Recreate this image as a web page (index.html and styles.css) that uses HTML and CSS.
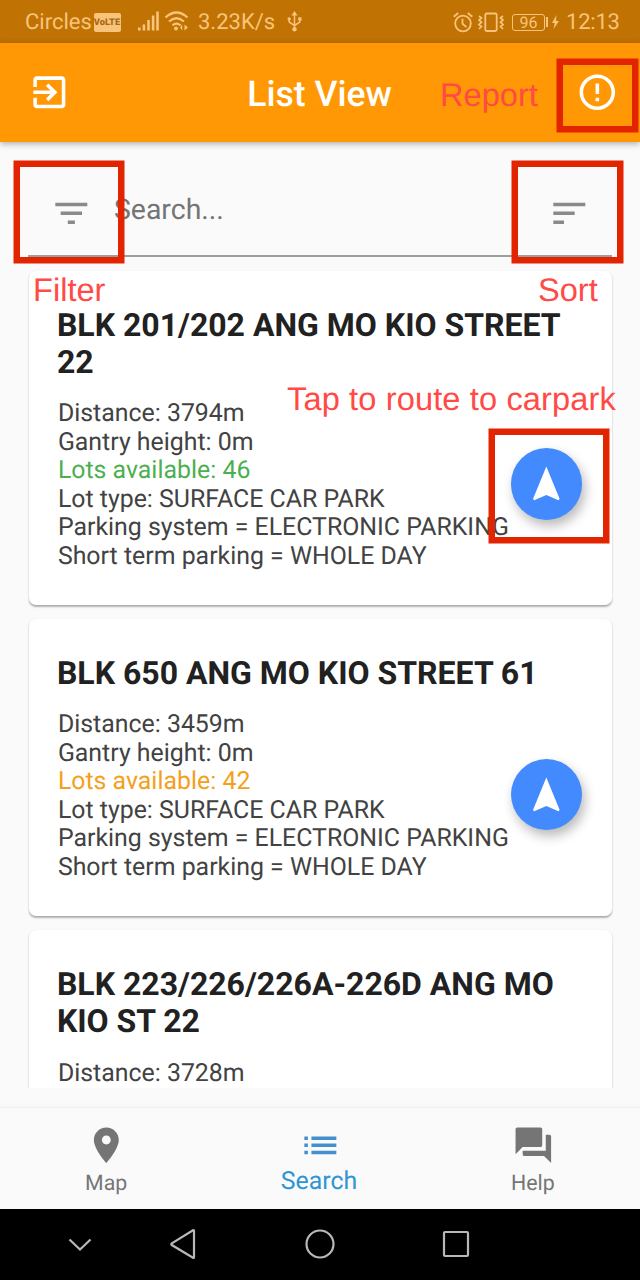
FILE: index.html
```html
<!DOCTYPE html>
<html lang="en">
<head>
<meta charset="utf-8">
<title>List View</title>
<link rel="stylesheet" href="styles.css">
</head>
<body>
<div class="screen">
  <header class="status">
    <span class="carrier">Circles</span>
    <span class="volte">VoLTE</span>
    <svg class="net" width="52" height="24" viewBox="0 0 52 24" fill="currentColor">
      <path d="M0 17.500h2.600v3H0zM4.600 14.500h2.600v6H4.600zM9.200 10h2.600v10.500H9.200zM13.800 5.500h2.600v15h-2.600zM18.200 1.500h2.600v19h-2.600z"/>
      <g fill="none" stroke="currentColor" stroke-width="2.200"><path d="M27.500 7.500q11-10 22 0M31 11.500q7.500-6.500 15 0M34.500 15.300q4-3.500 8 0"/></g>
      <circle cx="38" cy="18.500" r="2"/><path d="M42 17.500l2.200-3v6zM50 17.500l-3.500-3v6z"/>
    </svg>
    <span class="speed">3.23K/s</span>
    <svg class="usb" width="15" height="22" viewBox="0 0 15 22" fill="currentColor">
      <path d="M7.500 0l3 4.500h-6z"/><circle cx="7.500" cy="18.300" r="2.200"/><circle cx="2.200" cy="8" r="1.700"/><path d="M11.200 6.300h3.300v3.300h-3.300z"/>
      <path d="M7.500 3v15M2.200 8v3.200l5.300 3.300 5.300-3.300V8" fill="none" stroke="currentColor" stroke-width="1.500"/>
    </svg>
    <span class="spacer"></span>
    <svg class="alarm" width="20" height="21" viewBox="0 0 20 21" fill="none" stroke="currentColor" stroke-width="1.800">
      <circle cx="10" cy="11.500" r="7.800"/><path d="M9.500 6.800v5l4 3.300M.700 4.800L5.200 1M19.300 4.800L14.800 1"/>
    </svg>
    <svg class="vibrate" width="26" height="21" viewBox="0 0 26 21" fill="none" stroke="currentColor" stroke-width="1.800">
      <rect x="7.300" y="1.500" width="11.400" height="17.500" rx="1.500"/>
      <path d="M1 4l2.500 2L1 8l2.500 2.300L1 12.600l2.500 2L1 17M25 4l-2.500 2L25 8l-2.500 2.300 2.500 2.300-2.500 2L25 17" stroke-width="1.700"/>
    </svg>
    <span class="battery">96</span>
    <svg class="bolt" width="13" height="18" viewBox="0 0 13 18" fill="currentColor"><path d="M0 4h2v10H0zM10.500 2L6 10h2.700l-1.200 6L13 8h-3z"/></svg>
    <span class="clock">12:13</span>
  </header>

  <div class="appbar">
    <svg class="icon" viewBox="0 0 24 24"><path d="M10.090 15.590L11.500 17l5-5-5-5-1.410 1.410L12.670 11H3v2h9.670l-2.580 2.590zM19 3H5c-1.110 0-2 .9-2 2v4h2V5h14v14H5v-4H3v4c0 1.100.89 2 2 2h14c1.100 0 2-.9 2-2V5c0-1.100-.9-2-2-2z"/></svg>
    <h1>List View</h1>
    <svg class="icon" viewBox="0 0 24 24"><path d="M11 15h2v2h-2zm0-8h2v6h-2zm.99-5C6.470 2 2 6.480 2 12s4.470 10 9.990 10C17.520 22 22 17.520 22 12S17.520 2 11.990 2zM12 20c-4.420 0-8-3.580-8-8s3.580-8 8-8 8 3.580 8 8-3.580 8-8 8z"/></svg>
  </div>

  <div class="search">
    <svg class="icon" viewBox="0 0 24 24"><path d="M10 18h4v-2h-4v2zM3 6v2h18V6H3zm3 7h12v-2H6v2z"/></svg>
    <span class="hint">Search...</span>
    <svg class="icon" viewBox="0 0 24 24"><path d="M3 18h6v-2H3v2zM3 6v2h18V6H3zm0 7h12v-2H3v2z"/></svg>
  </div>

  <main class="list">
    <article class="card">
      <h2>BLK 201/202 ANG MO KIO STREET 22</h2>
      <div class="row">
        <div class="info">
          <p>Distance: 3794m</p>
          <p>Gantry height: 0m</p>
          <p class="green">Lots available: 46</p>
          <p>Lot type: SURFACE CAR PARK</p>
          <p>Parking system = ELECTRONIC PARKING</p>
          <p>Short term parking = WHOLE DAY</p>
        </div>
        <div class="fab"><svg class="icon" viewBox="0 0 24 24"><path d="M12 2L4.500 20.290l.71.71L12 18l6.790 3 .71-.71z"/></svg></div>
      </div>
    </article>
    <article class="card">
      <h2>BLK 650 ANG MO KIO STREET 61</h2>
      <div class="row">
        <div class="info">
          <p>Distance: 3459m</p>
          <p>Gantry height: 0m</p>
          <p class="orange">Lots available: 42</p>
          <p>Lot type: SURFACE CAR PARK</p>
          <p>Parking system = ELECTRONIC PARKING</p>
          <p>Short term parking = WHOLE DAY</p>
        </div>
        <div class="fab"><svg class="icon" viewBox="0 0 24 24"><path d="M12 2L4.500 20.290l.71.71L12 18l6.790 3 .71-.71z"/></svg></div>
      </div>
    </article>
    <article class="card">
      <h2>BLK 223/226/226A-226D ANG MO KIO ST 22</h2>
      <div class="row">
        <div class="info"><p>Distance: 3728m</p></div>
      </div>
    </article>
  </main>

  <nav class="tabs">
    <div class="tab">
      <svg class="icon" viewBox="0 0 24 24"><path d="M12 2C8.130 2 5 5.130 5 9c0 5.250 7 13 7 13s7-7.750 7-13c0-3.870-3.130-7-7-7zm0 9.500c-1.380 0-2.500-1.120-2.500-2.500s1.120-2.500 2.500-2.500 2.500 1.120 2.500 2.500-1.120 2.500-2.500 2.500z"/></svg>
      <span>Map</span>
    </div>
    <div class="tab active">
      <svg class="icon" viewBox="0 0 24 24"><path d="M3 13h2v-2H3v2zm0 4h2v-2H3v2zm0-8h2V7H3v2zm4 4h14v-2H7v2zm0 4h14v-2H7v2zM7 7v2h14V7H7z"/></svg>
      <span>Search</span>
    </div>
    <div class="tab">
      <svg class="icon" viewBox="0 0 24 24"><path d="M21 6h-2v9H6v2c0 .55.45 1 1 1h11l4 4V7c0-.55-.45-1-1-1zm-4 6V3c0-.55-.45-1-1-1H3c-.55 0-1 .45-1 1v14l4-4h10c.55 0 1-.45 1-1z"/></svg>
      <span>Help</span>
    </div>
  </nav>

  <footer class="system">
    <svg width="24" height="32" viewBox="0 0 24 32"><path d="M1.500 11.500L12 21.500l10.500-10"/></svg>
    <svg width="26" height="32" viewBox="0 0 26 32"><path d="M24 2.700V29.300q0 1-1 .5L1.800 17q-1-.8 0-1.600L23 2.300q1-.5 1 .4z"/></svg>
    <svg width="30" height="32" viewBox="0 0 30 32"><circle cx="15" cy="16" r="13.500"/></svg>
    <svg width="28" height="32" viewBox="0 0 28 32"><rect x="2" y="4" width="24" height="24" rx="1"/></svg>
  </footer>

  <div class="mark mark-report"></div>
  <div class="mark mark-filter"></div>
  <div class="mark mark-sort"></div>
  <div class="mark mark-route"></div>
  <span class="note note-report">Report</span>
  <span class="note note-filter">Filter</span>
  <span class="note note-sort">Sort</span>
  <span class="note note-route">Tap to route to carpark</span>
</div>
</body>
</html>
```
FILE: styles.css
```css
* { box-sizing: border-box; }
body { margin: 0; font-family: Roboto, "Liberation Sans", sans-serif; text-rendering: geometricPrecision; }
h1, h2, p { margin: 0; }
.screen { position: relative; width: 640px; height: 1280px; overflow: hidden; background: #fafafa; display: flex; flex-direction: column; }
.icon { width: 42.67px; height: 42.67px; fill: currentColor; flex: none; display: block; }

.status { height: 42.67px; flex: none; background: #c07202; color: #f8c47c; display: flex; align-items: center; padding: 2px 22px 0 25px; font-size: 22px; line-height: 26px; white-space: nowrap; }
.status span { padding-top: 2px; }
.status svg { flex: none; }
.carrier { width: 68.500px; }
.status .volte { width: 27px; height: 19px; padding-top: 0; background: #f8c47c; color: #a9690f; border-radius: 2px; font-size: 9.300px; line-height: 19px; font-weight: 900; text-align: center; }
.net { margin-left: 17.500px; }
.speed { margin-left: 8px; width: 75px; }
.usb { margin-left: 14px; }
.spacer { flex: 1; }
.alarm { margin-right: -1px; }
.vibrate { margin-left: 6px; }
.status .battery { width: 33px; height: 17px; padding-top: 0; border: 1px solid currentColor; border-radius: 3px; font-size: 16px; line-height: 16px; text-align: center; margin-left: 8px; }
.bolt { margin: 0 7px 0 1px; }
.clock { width: 52px; letter-spacing: -.2px; }

.appbar { height: 99.500px; flex: none; background: #ff9804; color: #fff; display: flex; align-items: center; justify-content: space-between; padding: 0 21.300px 0 28.400px; box-shadow: 0 2px 6px rgba(0,0,0,.3); z-index: 1; }
.appbar h1 { font-size: 35.560px; line-height: 42px; font-weight: 500; margin-right: 8px; padding-top: 4px; }

.search { height: 114.500px; flex: none; margin: 0 28.400px; border-bottom: 2px solid #9e9e9e; color: #8a8a8a; display: flex; align-items: flex-start; padding: 28px 21.300px 0; }
.search .icon { margin-top: 21.500px; }
.hint { flex: 1; font-size: 28.440px; line-height: 34px; color: #757575; margin: 23px 0 0 21.600px; }

.list { flex: none; height: 831.300px; padding: 14.200px 28.500px 0; display: flex; flex-direction: column; gap: 14.200px; clip-path: inset(0); }
.card { flex: none; background: #fff; border-radius: 7px; padding: 36.100px 28.400px 34.900px; box-shadow: 0 1.500px 2px rgba(0,0,0,.28), 0 1px 1px rgba(0,0,0,.06); }
.card h2 { font-size: 32px; line-height: 37.330px; font-weight: 700; color: #212121; }
.row { margin-top: 17.800px; display: flex; align-items: center; justify-content: space-between; }
.info { padding: 1px 0 0 1px; margin-bottom: -1px; font-size: 24.890px; line-height: 28.440px; color: #424242; white-space: nowrap; }
.green { color: #4caf50; }
.orange { color: #f5a01c; }
.fab { width: 71.100px; height: 71.100px; margin: -1.500px 1px 0 0; border-radius: 50%; background: #448aff; color: #fff; display: flex; align-items: center; justify-content: center; box-shadow: 3px 6px 12px rgba(0,0,0,.28); }

.tabs { height: 101px; margin-top: 20px; flex: none; display: flex; color: #757575; box-shadow: 0 -1px 2px rgba(0,0,0,.06); }
.tab { flex: 1; display: flex; flex-direction: column; align-items: center; padding-top: 16px; font-size: 21.330px; line-height: 25px; }
.tab span { margin-top: 4.500px; margin-right: 1px; }
.active { color: #2f95d3; font-size: 24.890px; line-height: 28px; }
.active span { margin-top: 1px; margin-right: 2px; }
.active .icon { color: #438fd0; }

.system { flex: 1; background: #000; display: flex; align-items: center; padding-left: 68px; }
.system svg { fill: none; stroke: #b8b8b8; stroke-width: 2.200; flex: none; }
.system svg:nth-child(2) { margin-left: 77.500px; }
.system svg:nth-child(3) { margin-left: 109px; }
.system svg:nth-child(4) { margin-left: 107px; }

.mark { position: absolute; border: 6px solid #e22400; box-shadow: 0 0 0 .5px #e22400; z-index: 2; }
.mark-report { left: 557px; top: 59px; width: 81px; height: 73px; }
.mark-filter { left: 14px; top: 161px; width: 110px; height: 102px; }
.mark-sort { left: 512px; top: 161px; width: 111px; height: 102px; }
.mark-route { left: 489px; top: 429px; width: 120px; height: 114px; }
.note { position: absolute; z-index: 2; color: #ff4a45; font: 32.600px/38px "Liberation Sans", Arial, sans-serif; white-space: nowrap; }
.note-report { left: 440px; top: 76px; }
.note-filter { left: 33px; top: 271px; }
.note-sort { left: 538px; top: 271px; }
.note-route { left: 287px; top: 380px; letter-spacing: .13px; }
```
